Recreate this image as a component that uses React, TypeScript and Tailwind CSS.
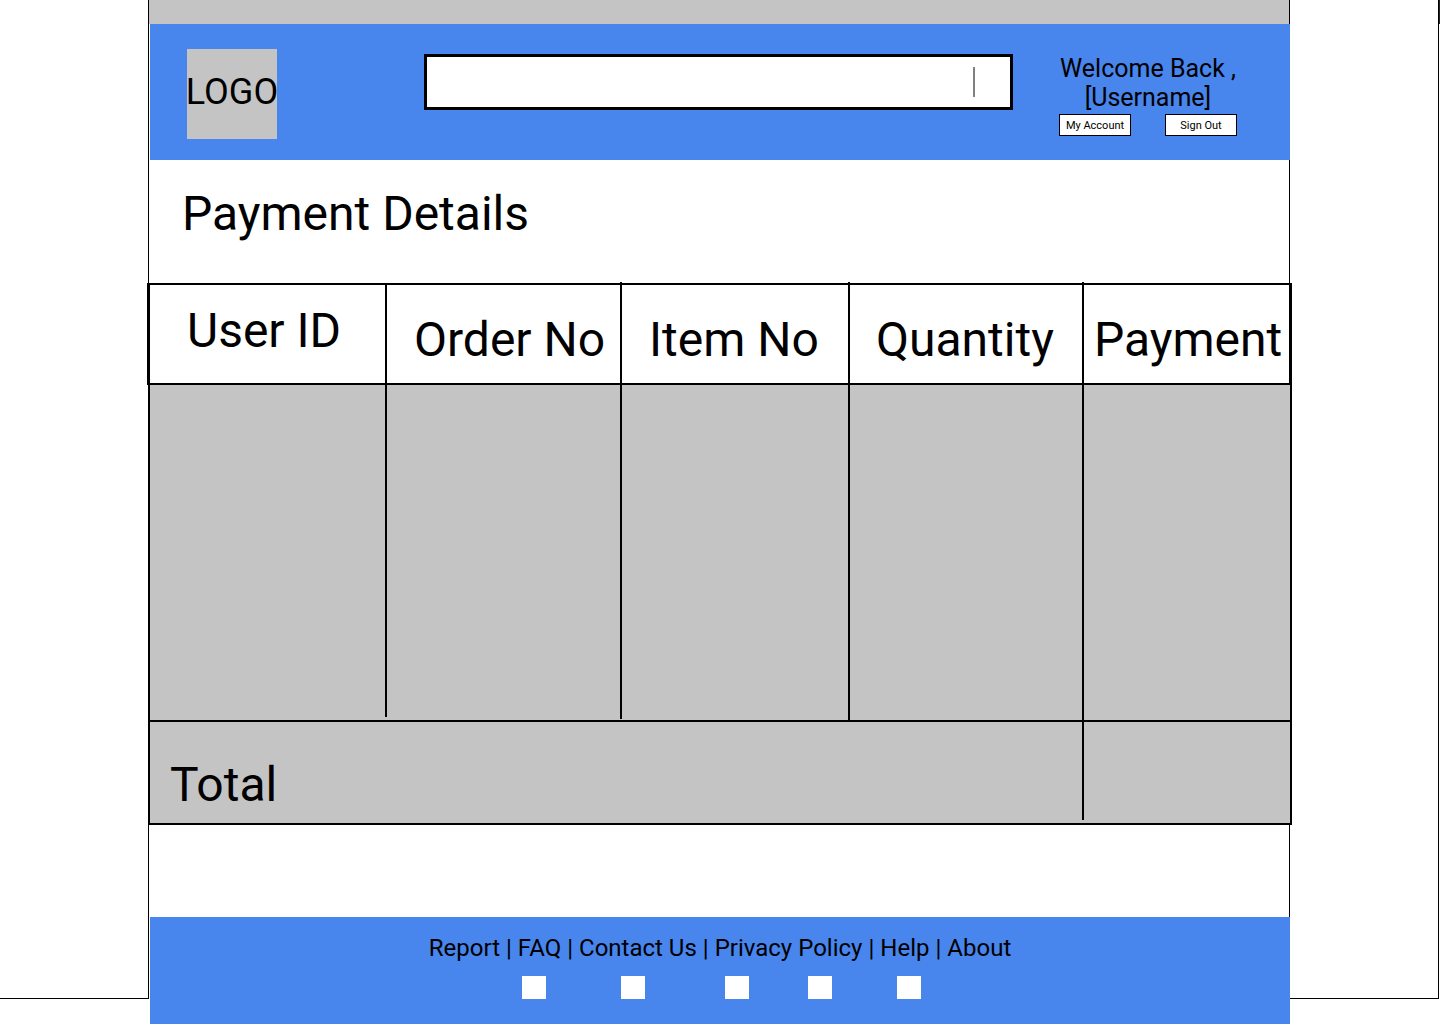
const footerLinks = ["Report", "FAQ", "Contact Us", "Privacy Policy", "Help", "About"];

const socialLinks = [
  { name: "Facebook", spacing: "" },
  { name: "Twitter", spacing: "ml-[75px]" },
  { name: "Instagram", spacing: "ml-20" },
  { name: "YouTube", spacing: "ml-[59px]" },
  { name: "LinkedIn", spacing: "ml-[65px]" },
];

const columns = [
  { title: "User ID", head: "pl-[37px] pb-[6px] shadow-[-1px_0_0_#000] border-l-2", nub: "", rule: "h-[332px] border-r-2" },
  { title: "Order No", head: "pl-[27px] pt-3", nub: "after:absolute after:-top-[3px] after:-right-[2px] after:h-px after:w-[2px] after:bg-black", rule: "h-[334px] border-r-2" },
  { title: "Item No", head: "pl-[27px] pt-3", nub: "after:absolute after:-top-[3px] after:-right-[2px] after:h-px after:w-[2px] after:bg-black", rule: "h-[335px] border-r-2" },
  { title: "Quantity", head: "pl-[26px] pt-3", nub: "after:absolute after:-top-[3px] after:-right-[2px] after:h-px after:w-[2px] after:bg-black", rule: "h-[335px] border-r-2" },
  { title: "Payment", head: "pl-[10px] pt-3", nub: "", rule: "h-[335px]" },
];

function Header() {
  return (
    <header className="ml-px flex items-start bg-[#4885ed] pt-[25px] pr-[53px] pb-[21px] pl-[37px]">
      <div className="flex size-[90px] shrink-0 items-center justify-center bg-[#c4c4c4] text-4xl leading-[42px] whitespace-nowrap">
        <span className="-mt-1">LOGO</span>
      </div>
      <form className="mt-[5px] mr-[46px] ml-[147px] flex h-14 min-w-0 flex-1 items-center border-3 border-black bg-white">
        <input type="text" aria-label="Search" className="h-full min-w-0 flex-1 px-3 text-xl outline-none" />
        <span className="mr-[35px] h-[30px] w-[2px] bg-[#808080]" />
      </form>
      <div className="w-[178px] shrink-0">
        <p className="mt-[5px] text-center text-[25px] leading-[29px]">
          Welcome Back ,<br />[Username]
        </p>
        <div className="mt-[2px] flex justify-between text-[11px] leading-[18px]">
          <button type="button" className="w-[72px] border border-black bg-white pt-[2px]">My Account</button>
          <button type="button" className="w-[72px] border border-black bg-white pt-[2px]">Sign Out</button>
        </div>
      </div>
    </header>
  );
}

function PaymentTable() {
  return (
    <table className="w-full table-fixed border-separate border-spacing-0 bg-[#c4c4c4] text-left text-5xl leading-14">
      <colgroup>
        <col className="w-[239px]" />
        <col className="w-[235px]" />
        <col className="w-[228px]" />
        <col className="w-[234px]" />
        <col className="w-[208px]" />
      </colgroup>
      <thead>
        <tr className="h-[102px]">
          {columns.map((c, i) => (
            <th
              key={c.title}
              scope="col"
              className={`relative border-y-2 border-black bg-white p-0 font-normal whitespace-nowrap ${c.head} ${c.nub} ${i === 4 ? "border-r-3" : "border-r-2"}`}
            >
              {c.title}
            </th>
          ))}
        </tr>
      </thead>
      <tbody>
        <tr className="h-[337px] align-top">
          {columns.map((c, i) => (
            <td
              key={c.title}
              className={`border-b-2 border-black p-0 ${i === 0 ? "border-l-2" : ""} ${i === 4 ? "border-r-2" : ""}`}
            >
              <div className={`border-black ${c.rule}`} />
            </td>
          ))}
        </tr>
      </tbody>
      <tfoot>
        <tr className="h-[103px] align-top">
          <th scope="row" colSpan={4} className="border-b-2 border-l-2 border-black p-0 font-normal">
            <div className="h-[98px] border-r-2 border-black pt-[35px] pl-5">Total</div>
          </th>
          <td className="border-r-2 border-b-2 border-black p-0" />
        </tr>
      </tfoot>
    </table>
  );
}

function Footer() {
  return (
    <footer className="ml-px flex-1 bg-[#4885ed] pt-4">
      <nav className="flex justify-center gap-[6px] text-2xl leading-[30px] whitespace-nowrap">
        {footerLinks.map((label, i) => (
          <span key={label} className="flex gap-[6px]">
            {i > 0 && <span>|</span>}
            <a href="#">{label}</a>
          </span>
        ))}
      </nav>
      <div className="mt-[13px] flex justify-center pl-[3px]">
        {socialLinks.map((s) => (
          <a key={s.name} href="#" aria-label={s.name} className={`h-[23px] w-6 bg-white ${s.spacing}`} />
        ))}
      </div>
    </footer>
  );
}

export default function App() {
  return (
    <div className="grid min-h-screen grid-cols-[149fr_1141fr_151fr] bg-white font-[Roboto,sans-serif] text-black">
      <aside className="mb-[25px] border-r border-b border-black" />
      <main className="flex min-w-0 flex-col">
        <div className="h-6 border-r border-black bg-[#c4c4c4]" />
        <Header />
        <div className="border-r border-black pt-[26px] pb-[41px] pl-[33px]">
          <h1 className="text-5xl leading-14">Payment Details</h1>
        </div>
        <div className="relative -mr-[2px] -ml-px">
          <PaymentTable />
        </div>
        <div className="h-[92px] border-r border-black" />
        <Footer />
      </main>
      <aside className="mr-px mb-[25px] flex">
        <div className="flex-1 border-r border-b border-black" />
        <div className="h-6 w-px bg-[#222222]" />
      </aside>
    </div>
  );
}
